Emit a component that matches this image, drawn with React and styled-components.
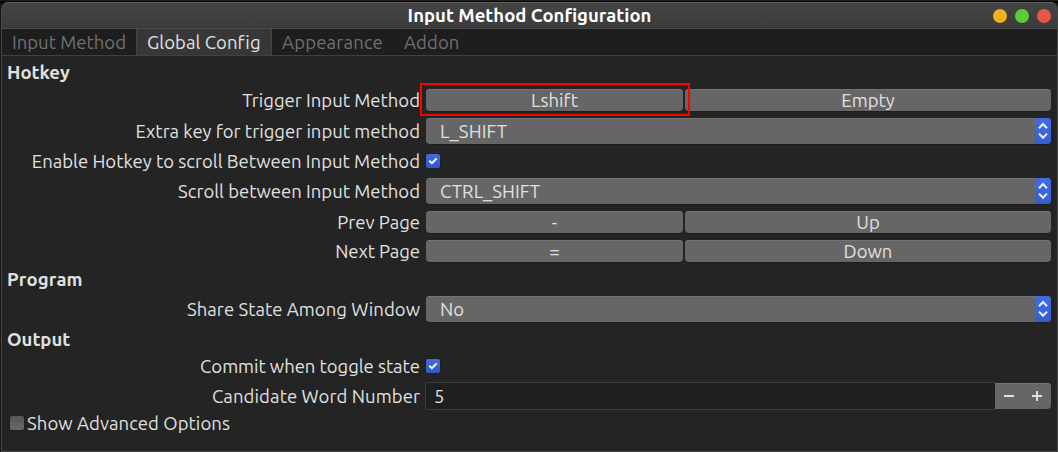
import React from "react";
import styled, { createGlobalStyle } from "styled-components";

const GlobalStyle = createGlobalStyle`
  * { box-sizing: border-box; }
  body {
    margin: 0;
    background: #0c0c0c;
    font-family: Ubuntu, "Noto Sans", sans-serif;
    font-size: 18.5px;
    color: #e0e0e0;
    overflow: hidden;
  }
`;

const Desktop = styled.div`
  width: 1058px;
  height: 452px;
  padding: 2px 0 0 1px;
  background: linear-gradient(to bottom, #1c1c1c 0 1px, #080808 1px 3px, #161616 3px);
`;

const Window = styled.main`
  display: flex;
  flex-direction: column;
  width: 1057px;
  height: 450px;
  border: 1px solid #484848;
  border-top: 0;
  border-radius: 7px 7px 0 0;
  background: #242424;
  overflow: hidden;
`;

const TitleBar = styled.header`
  display: grid;
  grid-template-columns: 1fr auto 1fr;
  align-items: center;
  height: 27px;
  flex: none;
  padding: 0 6px;
  border-top: 1px solid #606060;
  border-bottom: 1px solid #4a4a4a;
  background: linear-gradient(#444, #3b3b3b);
`;

const Title = styled.h1`
  grid-column: 2;
  margin: 0;
  font-size: 18.5px;
  line-height: 25px;
  color: #fff;
`;

const WindowButtons = styled.div`
  display: flex;
  justify-content: flex-end;
  gap: 8px;
`;

const WindowButton = styled.span`
  width: 14px;
  height: 14px;
  border-radius: 50%;
  background: ${(p) => p.$color};
`;

const Tabs = styled.nav`
  display: flex;
  height: 27px;
  flex: none;
  background: #1e1e1e;
  border-bottom: 1px solid #404040;
`;

const Tab = styled.span`
  width: ${(p) => p.$width}px;
  padding-left: 10px;
  line-height: 26px;
  color: ${(p) => (p.$active ? "#e2e2e2" : "#707070")};
  background: ${(p) => (p.$active ? "#373737" : "transparent")};
  border: solid #444;
  border-width: ${(p) => (p.$active ? "0 1px" : "0")};
`;

const Text = styled.span`
  letter-spacing: ${(p) => p.$track || 0}px;
  margin-right: ${(p) => -(p.$track || 0)}px;
  white-space: pre;
`;

const Form = styled.div`
  display: flex;
  flex-direction: column;
  padding: 6px 6px 0 5px;
`;

const Section = styled.h2`
  margin: ${(p) => (p.$first ? 0 : 7)}px 0 -2px;
  height: 22px;
  line-height: 20px;
  font-size: 18.5px;
`;

const Row = styled.div`
  display: grid;
  grid-template-columns: 413px 1fr;
  column-gap: 6px;
  align-items: center;
  height: ${(p) => p.$height}px;
  margin-top: ${(p) => p.$gap ?? 7}px;
`;

const Label = styled.div`
  justify-self: end;
  line-height: 20px;
`;

const KeyPair = styled.div`
  position: relative;
  display: grid;
  grid-template-columns: 257px 1fr;
  gap: 2px;
`;

const KeyButton = styled.button`
  height: 22px;
  padding: 0;
  border: 0;
  border-radius: 4px;
  font: inherit;
  line-height: 22px;
  color: #e0e0e0;
  background: #666;
  box-shadow: inset 0 1px #757575, 0 1px #1d1d1d;
`;

const Highlight = styled.div`
  position: absolute;
  top: -6px;
  left: -6px;
  width: 270px;
  height: 33px;
  border: 2px solid #f00;
`;

const Select = styled.div`
  display: flex;
  justify-content: space-between;
  height: 26px;
  padding-left: 14px;
  line-height: 26px;
  border-radius: 4px;
  overflow: hidden;
  background: #666;
  box-shadow: inset 0 1px #757575, 0 1px #1d1d1d;
`;

const SelectArrows = styled.div`
  width: 16px;
  height: 26px;
  background: linear-gradient(#406be4, #355fd0);
  svg { display: block; }
`;

const Check = styled.span`
  display: block;
  width: 14px;
  height: 14px;
  border-radius: 2px;
  background: ${(p) => (p.$on ? "linear-gradient(#426be3, #3159c6)" : "linear-gradient(#565656, #686868)")};
  box-shadow: 0 0 0 1px #1f1f1f;
  svg { display: block; }
`;

const Spin = styled.div`
  display: flex;
  align-items: center;
  height: 28px;
  margin-left: -1px;
`;

const SpinValue = styled.div`
  flex: 1;
  height: 28px;
  padding-left: 8px;
  line-height: 26px;
  border: 1px solid #3c3c3c;
  border-right: 0;
  border-radius: 4px 0 0 4px;
  background: #1f1f1f;
`;

const SpinButtons = styled.div`
  width: 56px;
  height: 26px;
  border-radius: 0 4px 4px 0;
  background: #666;
  box-shadow: inset 0 1px #757575;
  svg { display: block; }
`;

const Advanced = styled.div`
  display: flex;
  align-items: center;
  gap: 3px;
  height: 20px;
  margin-top: 3px;
  padding-left: 3px;
  line-height: 20px;
`;

const CheckBox = ({ on }) => (
  <Check $on={on}>
    {on && (
      <svg width="14" height="14" viewBox="0 0 14 14" fill="none" stroke="#fff" strokeWidth="2">
        <path d="M3.2 6.8 L5.9 9.2 L10.7 4.4" />
      </svg>
    )}
  </Check>
);

const Combo = ({ value, track }) => (
  <Select>
    <Text $track={track}>{value}</Text>
    <SelectArrows>
      <svg width="16" height="26" viewBox="0 0 16 26" fill="none" stroke="#e8edfc" strokeWidth="2.1">
        <path d="M4 10.2 L8 6 L12 10.2 M4 15.6 L8 19.8 L12 15.6" />
      </svg>
    </SelectArrows>
  </Select>
);

const Keys = ({ first, second, marked }) => (
  <KeyPair>
    <KeyButton><Text>{first}</Text></KeyButton>
    <KeyButton><Text>{second}</Text></KeyButton>
    {marked && <Highlight />}
  </KeyPair>
);

const Field = ({ label, track, height, gap, children }) => (
  <Row $height={height} $gap={gap}>
    <Label><Text $track={track}>{label}</Text></Label>
    {children}
  </Row>
);

export default function App() {
  return (
    <>
      <GlobalStyle />
      <Desktop>
        <Window>
          <TitleBar>
            <Title><Text>Input Method Configuration</Text></Title>
            <WindowButtons>
              <WindowButton $color="#f2b01e" />
              <WindowButton $color="#5bcb38" />
              <WindowButton $color="#e9544b" />
            </WindowButtons>
          </TitleBar>
          <Tabs>
            <Tab $width={134}><Text>Input Method</Text></Tab>
            <Tab $width={136} $active><Text $track={0.05}>Global Config</Text></Tab>
            <Tab $width={122}><Text $track={0.18}>Appearance</Text></Tab>
            <Tab $width={80}><Text $track={0.1}>Addon</Text></Tab>
          </Tabs>
          <Form>
            <Section $first><Text>Hotkey</Text></Section>
            <Field label="Trigger Input Method" height={22}>
              <Keys first="Lshift" second="Empty" marked />
            </Field>
            <Field label="Extra key for trigger input method" height={26}>
              <Combo value="L_SHIFT" track={0.15} />
            </Field>
            <Field label="Enable Hotkey to scroll Between Input Method" track={0.02} height={20}>
              <CheckBox on />
            </Field>
            <Field label="Scroll between Input Method" height={26}>
              <Combo value="CTRL_SHIFT" track={0.05} />
            </Field>
            <Field label="Prev Page" height={22}>
              <Keys first="-" second="Up" />
            </Field>
            <Field label="Next Page" track={-0.1} height={22}>
              <Keys first="=" second="Down" />
            </Field>
            <Section><Text $track={0.15}>Program</Text></Section>
            <Field label="Share State Among Window" track={0.04} height={26}>
              <Combo value="No" />
            </Field>
            <Section><Text>Output</Text></Section>
            <Field label="Commit when toggle state" track={-0.04} height={20}>
              <CheckBox on />
            </Field>
            <Field label="Candidate Word Number" track={0.09} height={28} gap={6}>
              <Spin>
                <SpinValue>5</SpinValue>
                <SpinButtons>
                  <svg width="56" height="26" viewBox="0 0 56 26" stroke="#e0e0e0" strokeWidth="2">
                    <path d="M9 13 H19 M37 13 H47 M42 8 V18" />
                  </svg>
                </SpinButtons>
              </Spin>
            </Field>
            <Advanced>
              <CheckBox />
              <Text $track={0.06}>Show Advanced Options</Text>
            </Advanced>
          </Form>
        </Window>
      </Desktop>
    </>
  );
}
